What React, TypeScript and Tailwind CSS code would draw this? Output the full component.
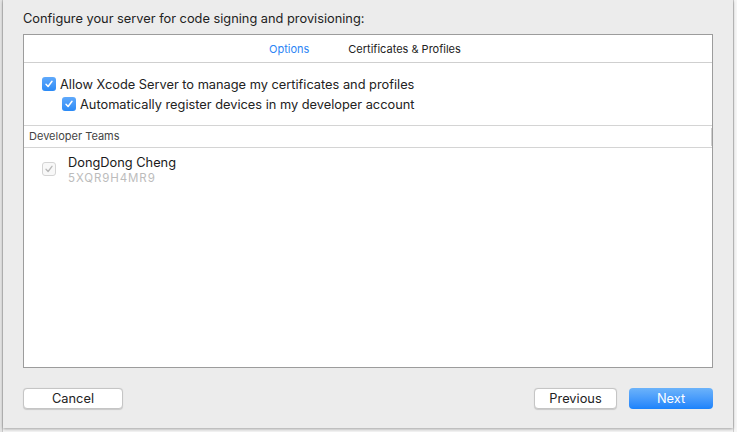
import React from "react";

function Check({ disabled = false }: { disabled?: boolean }) {
  if (disabled) {
    return (
      <div className="w-[14px] h-[14px] rounded-[3px] border border-[#d4d4d4] bg-[#f8f8f8] flex items-center justify-center shrink-0">
        <svg width="10" height="10" viewBox="0 0 10 10">
          <path d="M2 5.3 L4.1 7.5 L8 2.3" fill="none" stroke="#b8b8b8" strokeWidth="1.3" strokeLinecap="round" strokeLinejoin="round" />
        </svg>
      </div>
    );
  }
  return (
    <div className="w-[14px] h-[14px] rounded-[3px] bg-gradient-to-b from-[#5fa9fb] to-[#2a8af6] flex items-center justify-center shrink-0">
      <svg width="10" height="10" viewBox="0 0 10 10">
        <path d="M2 5.3 L4.1 7.5 L8 2.3" fill="none" stroke="#ffffff" strokeWidth="1.5" strokeLinecap="round" strokeLinejoin="round" />
      </svg>
    </div>
  );
}

export default function App() {
  const font = { fontFamily: "Inter, Roboto, 'Liberation Sans', sans-serif" };
  return (
    <div className="w-[737px] h-[432px] bg-[#f4f4f4] relative overflow-hidden" style={font}>
      <div className="absolute left-0 top-0 w-[3px] h-full bg-[#e4e4e4] border-r border-[#c8c8c8]" />
      <div className="absolute right-0 top-0 w-[4px] h-full bg-[#f6f6f6] border-l border-[#cfcfcf]" />
      <div className="absolute left-[3px] top-0 w-[730px] h-[428px] bg-[#ececec] shadow-[0_1px_3px_rgba(0,0,0,0.35)] flex flex-col px-[20px]">
        <div className="h-[34px] flex items-center pt-[3px] text-[12.8px] text-[#222]">
          Configure your server for code signing and provisioning:
        </div>
        <div className="w-[690px] h-[334px] border border-[#9c9c9c] bg-white flex flex-col">
          <div className="h-[28px] border-b border-[#cfcfcf] flex items-center pt-[1px] text-[11px]">
            <div className="ml-[245px] text-[#2c85f5]">Options</div>
            <div className="ml-[39px] text-[#222]">Certificates &amp; Profiles</div>
          </div>
          <div className="h-[63px] border-b border-[#d4d4d4] flex flex-col pl-[18px] pt-[14px] gap-[6px] text-[12.8px] text-[#222]">
            <div className="flex items-center gap-[4px] h-[14px]">
              <Check />
              <span className="pt-[1px]">Allow Xcode Server to manage my certificates and profiles</span>
            </div>
            <div className="flex items-center gap-[4px] h-[14px] ml-[20px]">
              <Check />
              <span className="pt-[1px]">Automatically register devices in my developer account</span>
            </div>
          </div>
          <div className="h-[22px] border-b border-[#d4d4d4] flex items-center pl-[5px] text-[11px] text-[#444] relative">
            Developer Teams
            <div className="absolute right-0 top-[2px] w-[1px] h-[18px] bg-[#d0d0d0]" />
          </div>
          <div className="flex items-start pl-[18px] pt-[6px]">
            <div className="mt-[8px]">
              <Check disabled />
            </div>
            <div className="ml-[12px] flex flex-col">
              <span className="text-[12.8px] text-[#1a1a1a] leading-[17px]">DongDong Cheng</span>
              <span className="text-[11.5px] text-[#bcbcbc] leading-[14px] tracking-[0.9px]">5XQR9H4MR9</span>
            </div>
          </div>
        </div>
        <div className="mt-[20px] flex items-center">
          <button className="w-[100px] h-[21px] rounded-[4px] bg-white border border-[#c5c5c5] shadow-[0_0.5px_1px_rgba(0,0,0,0.15)] text-[12.8px] text-[#222] flex items-center justify-center">
            Cancel
          </button>
          <div className="flex-1" />
          <button className="w-[83px] h-[21px] rounded-[4px] bg-white border border-[#c5c5c5] shadow-[0_0.5px_1px_rgba(0,0,0,0.15)] text-[12.8px] text-[#222] flex items-center justify-center">
            Previous
          </button>
          <button className="ml-[12px] w-[84px] h-[21px] rounded-[4px] bg-gradient-to-b from-[#6cb3fa] to-[#1a82fb] text-[12.8px] text-white flex items-center justify-center">
            Next
          </button>
        </div>
      </div>
    </div>
  );
}
